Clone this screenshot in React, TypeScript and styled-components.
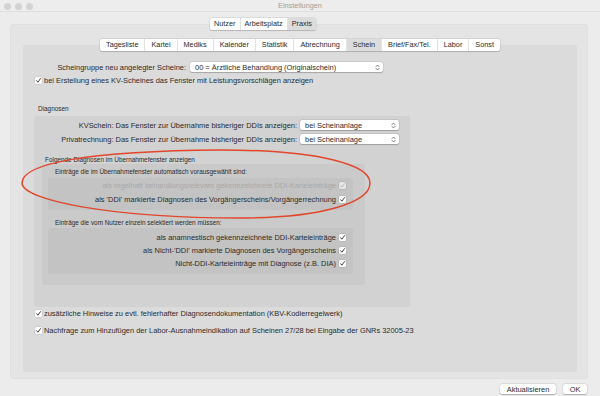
import styled, {createGlobalStyle} from "styled-components";

const GlobalStyle = createGlobalStyle`
  html, body {
    margin: 0;
    padding: 0;
    background: #ececec;
  }
  body {
    font-family: "Liberation Sans", Arial, Helvetica, sans-serif;
    color: #2b2b2b;
    -webkit-font-smoothing: antialiased;
  }
`

const outerTabs = ['Nutzer', 'Arbeitsplatz', 'Praxis']
const innerTabs = ['Tagesliste', 'Kartei', 'Mediks', 'Kalender', 'Statistik', 'Abrechnung', 'Schein', 'Brief/Fax/Tel.', 'Labor', 'Sonst']

const CheckMark = ({disabled}: { disabled?: boolean }) => (
    <Box $disabled={disabled}>
        <svg width="7" height="7" viewBox="0 0 7 7">
            <path d="M1.6 3.7 L2.9 5.2 L5.5 1.6" fill="none" stroke={disabled ? '#b4b4b4' : '#2a2a2a'}
                  strokeWidth="0.9" strokeLinecap="round" strokeLinejoin="round"/>
        </svg>
    </Box>
)

const Chevrons = () => (
    <svg width="5" height="7" viewBox="0 0 5 7">
        <path d="M1 2.6 L2.5 1.1 L4 2.6 M1 4.4 L2.5 5.9 L4 4.4" fill="none" stroke="#555" strokeWidth="0.8"
              strokeLinecap="round" strokeLinejoin="round"/>
    </svg>
)

const Select = ({value, width}: { value: string, width: number }) => (
    <SelectBox style={{width}}>
        <span>{value}</span>
        <Chevrons/>
    </SelectBox>
)

export default function App() {
    return (
        <Window>
            <GlobalStyle/>
            <TitleBar>
                <Lights>
                    <Light/><Light/><Light/>
                </Lights>
                <WindowTitle>Einstellungen</WindowTitle>
            </TitleBar>
            <Body>
                <Segmented $offset={200} $pad={4}>
                    {outerTabs.map(tab => <Segment key={tab} $active={tab === 'Praxis'}>{tab}</Segment>)}
                </Segmented>
                <OuterBox>
                    <Segmented $pad={6}>
                        {innerTabs.map(tab => <Segment key={tab} $active={tab === 'Schein'}>{tab}</Segment>)}
                    </Segmented>
                    <InnerBox>
                        <FormRow>
                            <RowLabel $width={163}>Scheingruppe neu angelegter Scheine:</RowLabel>
                            <Select value="00 = Ärztliche Behandlung (Originalschein)" width={193}/>
                        </FormRow>
                        <CheckRow $top={4}>
                            <CheckMark/>
                            <span>bei Erstellung eines KV-Scheines das Fenster mit Leistungsvorschlägen anzeigen</span>
                        </CheckRow>
                        <GroupTitle $left={15} $top={21}>Diagnosen</GroupTitle>
                        <DiagnosenBox>
                            <RightRow>
                                <span>KVSchein: Das Fenster zur Übernahme bisheriger DDIs anzeigen:</span>
                                <Select value="bei Scheinanlage" width={99}/>
                            </RightRow>
                            <RightRow>
                                <span>Privatrechnung: Das Fenster zur Übernahme bisheriger DDIs anzeigen:</span>
                                <Select value="bei Scheinanlage" width={99}/>
                            </RightRow>
                            <GroupTitle $left={11} $top={12}>Folgende Diagnosen im Übernahmefenster anzeigen</GroupTitle>
                            <FolgendeBox>
                                <GroupTitle $left={13} $top={0}>Einträge die im Übernahmefenster automatisch vorausgewählt sind:</GroupTitle>
                                <SubBox $top={2} $gap={4} $padTop={2}>
                                    <OptionRow $disabled>
                                        <span>als regelhaft behandlungsrelevant gekennzeichnete DDI-Karteieinträge</span>
                                        <CheckMark disabled/>
                                    </OptionRow>
                                    <OptionRow>
                                        <span>als 'DDI' markierte Diagnosen des Vorgängerscheins/Vorgängerrechnung</span>
                                        <CheckMark/>
                                    </OptionRow>
                                </SubBox>
                                <GroupTitle $left={13} $top={9}>Einträge die vom Nutzer einzeln selektiert werden müssen:</GroupTitle>
                                <SubBox $top={1} $gap={3} $padTop={4}>
                                    <OptionRow>
                                        <span>als anamnestisch gekennzeichnete DDI-Karteieinträge</span>
                                        <CheckMark/>
                                    </OptionRow>
                                    <OptionRow>
                                        <span>als Nicht-'DDI' markierte Diagnosen des Vorgängerscheins</span>
                                        <CheckMark/>
                                    </OptionRow>
                                    <OptionRow>
                                        <span>Nicht-DDI-Karteieinträge mit Diagnose (z.B. DIA)</span>
                                        <CheckMark/>
                                    </OptionRow>
                                </SubBox>
                            </FolgendeBox>
                        </DiagnosenBox>
                        <CheckRow $top={2}>
                            <CheckMark/>
                            <span>zusätzliche Hinweise zu evtl. fehlerhafter Diagnosendokumentation (KBV-Kodierregelwerk)</span>
                        </CheckRow>
                        <CheckRow $top={9}>
                            <CheckMark/>
                            <span>Nachfrage zum Hinzufügen der Labor-Ausnahmeindikation auf Scheinen 27/28 bei Eingabe der GNRs 32005-23</span>
                        </CheckRow>
                    </InnerBox>
                </OuterBox>
                <Footer>
                    <PushButton>Aktualisieren</PushButton>
                    <PushButton $wide>OK</PushButton>
                </Footer>
            </Body>
            <Annotation width="600" height="396" viewBox="0 0 600 396">
                <path
                    d="M22 183 C22 163, 90 151, 220 150 C320 150, 370 165, 370 183 C370 203, 320 218, 240 218 C110 218, 22 200, 22 183 Z"
                    fill="none" stroke="#e2462b" strokeWidth="1.5"/>
            </Annotation>
        </Window>
    )
}

const Window = styled.div`
  position: relative;
  width: 600px;
  height: 396px;
  overflow: hidden;
  background: #ececec;
  font-size: 7.45px;
`

const TitleBar = styled.div`
  position: relative;
  height: 12px;
  display: flex;
  align-items: center;
  justify-content: center;
  background: #ededed;
  border-bottom: 1px solid #dedede;
  box-sizing: border-box;
`

const Lights = styled.div`
  position: absolute;
  left: 4px;
  top: 3px;
  display: flex;
  gap: 4px;
`

const Light = styled.div`
  width: 7px;
  height: 7px;
  border-radius: 50%;
  background: #d3d3d3;
`

const WindowTitle = styled.div`
  font-size: 7.3px;
  color: #9d9d9d;
`

const Body = styled.div`
  display: flex;
  flex-direction: column;
  padding: 6px 12px 0 10px;
`

const Segmented = styled.div<{ $offset?: number, $pad: number }>`
  position: relative;
  z-index: 1;
  display: flex;
  align-self: ${p => p.$offset !== undefined ? 'flex-start' : 'center'};
  margin-left: ${p => p.$offset ?? 0}px;
  margin-bottom: -6px;
  height: 12px;
  background: #fff;
  border-radius: 2px;
  font-size: 7.3px;
  box-shadow: 0 0 0 0.5px rgba(0, 0, 0, 0.12), 0 0.5px 1px rgba(0, 0, 0, 0.15);

  & > div {
    padding: 0 ${p => p.$pad}px;
  }
`

const Segment = styled.div<{ $active?: boolean }>`
  display: flex;
  align-items: center;
  line-height: 12px;
  background: ${p => p.$active ? '#dcdcdc' : 'transparent'};
  border-left: 1px solid #e2e2e2;

  &:first-child {
    border-left: none;
  }
`

const OuterBox = styled.div`
  display: flex;
  flex-direction: column;
  height: 355px;
  box-sizing: border-box;
  padding: 14px 10px 6px 12px;
  background: #e4e4e4;
  border: 1px solid #e0e0e0;
  border-radius: 3px;
`

const InnerBox = styled.div`
  flex: 1;
  display: flex;
  flex-direction: column;
  padding-top: 17px;
  background: #dbdbdb;
  border-radius: 3px;
`

const FormRow = styled.div`
  display: flex;
  align-items: center;
  gap: 4px;
`

const RowLabel = styled.div<{ $width: number }>`
  width: ${p => p.$width}px;
  text-align: right;
  white-space: nowrap;
`

const SelectBox = styled.div`
  display: flex;
  align-items: center;
  justify-content: space-between;
  box-sizing: border-box;
  height: 10px;
  padding: 0 3px 0 5px;
  background: #fff;
  border-radius: 2px;
  box-shadow: 0 0 0 0.5px rgba(0, 0, 0, 0.1), 0 0.5px 1px rgba(0, 0, 0, 0.2);
  white-space: nowrap;
`

const CheckRow = styled.div<{ $top: number }>`
  display: flex;
  align-items: center;
  gap: 2px;
  height: 8px;
  margin: ${p => p.$top}px 0 0 12px;
  white-space: nowrap;
`

const Box = styled.div<{ $disabled?: boolean }>`
  width: 7px;
  height: 7px;
  flex: none;
  display: flex;
  background: ${p => p.$disabled ? '#e6e6e6' : '#fff'};
  border-radius: 1.5px;
  box-shadow: 0 0 0 0.5px rgba(0, 0, 0, 0.12);
`

const GroupTitle = styled.div<{ $left: number, $top: number }>`
  font-size: 6.4px;
  line-height: 8px;
  height: 8px;
  margin: ${p => p.$top}px 0 0 ${p => p.$left}px;
  white-space: nowrap;
`

const DiagnosenBox = styled.div`
  display: flex;
  flex-direction: column;
  width: 376px;
  margin: 3px 0 0 11px;
  padding: 4px 0 22px;
  background: #d2d2d2;
  border-radius: 3px;
`

const RightRow = styled.div`
  display: flex;
  align-items: center;
  justify-content: flex-end;
  gap: 3px;
  padding-right: 11px;

  & + & {
    margin-top: 4px;
  }
`

const FolgendeBox = styled.div`
  display: flex;
  flex-direction: column;
  width: 323px;
  margin-left: 8px;
  padding: 4px 0 11px;
  background: #cacaca;
  border-radius: 3px;
`

const SubBox = styled.div<{ $top: number, $gap: number, $padTop: number }>`
  display: flex;
  flex-direction: column;
  gap: ${p => p.$gap}px;
  width: 305px;
  box-sizing: border-box;
  margin: ${p => p.$top}px 0 0 6px;
  padding: ${p => p.$padTop}px 7px 6px 0;
  background: #c3c3c3;
  border-radius: 3px;
`

const OptionRow = styled.div<{ $disabled?: boolean }>`
  display: flex;
  align-items: center;
  justify-content: flex-end;
  gap: 3px;
  height: 10px;
  white-space: nowrap;
  color: ${p => p.$disabled ? '#a9a9a9' : 'inherit'};
`

const Footer = styled.div`
  display: flex;
  justify-content: flex-end;
  gap: 7px;
  margin-top: 5px;
  padding-right: 1px;
`

const PushButton = styled.div<{ $wide?: boolean }>`
  display: flex;
  align-items: center;
  justify-content: center;
  height: 10px;
  width: ${p => p.$wide ? '24px' : '56px'};
  background: #fff;
  border-radius: 2px;
  box-shadow: 0 0 0 0.5px rgba(0, 0, 0, 0.1), 0 0.5px 1px rgba(0, 0, 0, 0.2);
`

const Annotation = styled.svg`
  position: absolute;
  left: 0;
  top: 0;
  pointer-events: none;
`
